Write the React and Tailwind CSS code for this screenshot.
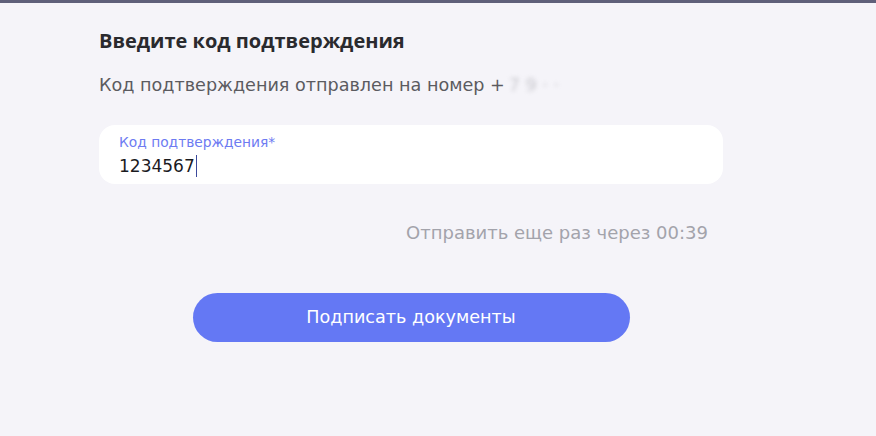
import React from 'react';

export default function App() {
  return (
    <div className="min-h-[436px] w-full bg-[#f5f4f9] border-t-[3px] border-[#5f607a]" style={{ fontFamily: '"DejaVu Sans", "Open Sans", sans-serif' }}>
      <div className="pl-[99px]">
        <div className="w-[624px]">
          {/* Heading */}
          <h1 className="pt-[24px] text-[20px] leading-[28px] font-bold text-[#2a2a2e]" style={{ fontFamily: '"Open Sans", sans-serif' }}>Введите код подтверждения</h1>
          <p className="mt-[18px] text-[17.6px] leading-[24px] text-[#5b5b60]">
            Код подтверждения отправлен на номер +
            <span className="ml-1 blur-[2px] text-[#9a9aa0] opacity-50">7 9 · ·</span>
          </p>

          {/* Input */}
          <div className="mt-[28px] h-[59px] rounded-[16px] bg-white px-[20px] pt-[8px]">
            <div className="text-[13.8px] leading-[18px] text-[#6d7bf2]">Код подтверждения*</div>
            <div className="flex items-center pt-[2px] text-[17px] leading-[26px] text-[#1b1b1f]">
              1234567
              <span className="ml-[1px] h-[22px] w-px bg-[#3c4a9c]" />
            </div>
          </div>

          {/* Resend */}
          <div className="mt-[37px] pr-[15px] text-right text-[18px] leading-[24px] text-[#a3a3ab]">Отправить еще раз через 00:39</div>

          {/* Button */}
          <div className="mt-[48px] flex justify-center">
            <button className="h-[49px] w-[437px] rounded-full bg-[#6478f4] text-[17.6px] text-white">Подписать документы</button>
          </div>
        </div>
      </div>
    </div>
  );
}
